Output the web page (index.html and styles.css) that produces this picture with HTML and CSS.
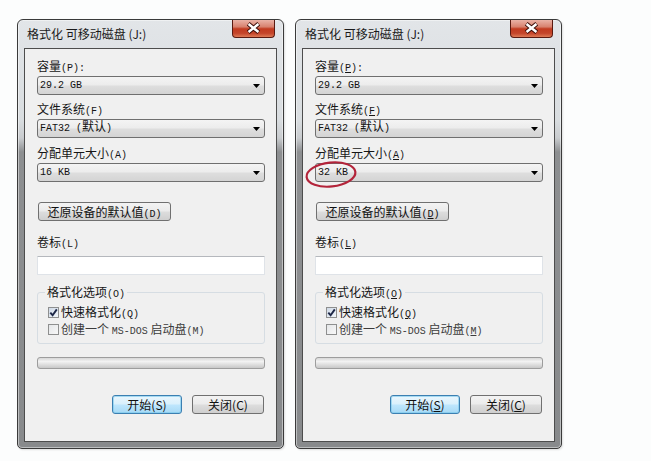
FILE: index.html
```html
<!DOCTYPE html>
<html lang="zh-CN">
<head>
<meta charset="utf-8">
<title>格式化 可移动磁盘 (J:)</title>
<link rel="stylesheet" href="styles.css">
</head>
<body>
<div class="page">
  <div class="win">
    <div class="titlebar">
      <span class="title">格式化 可移动磁盘 (J:)</span>
      <div class="close"><svg width="43" height="17" viewBox="0 0 43 17"><path d="M16 3.5 L27 12.5 M27 3.5 L16 12.5" stroke="#3a0d08" stroke-width="4.6" fill="none"/><path d="M16.3 3.8 L26.7 12.2 M26.7 3.8 L16.3 12.2" stroke="#ffffff" stroke-width="2.6" fill="none"/></svg></div>
    </div>
    <div class="client">
      <div class="lbl">容量<span class="m">(P):</span></div>
      <div class="combo"><span class="val">29.2 GB</span><svg class="arrow" width="7" height="4" viewBox="0 0 7 4"><path d="M0 0H7L3.5 4Z" fill="#000"/></svg></div>
      <div class="lbl gap8">文件系统<span class="m">(F)</span></div>
      <div class="combo"><span class="val">FAT32 (<span class="cj">默认</span>)</span><svg class="arrow" width="7" height="4" viewBox="0 0 7 4"><path d="M0 0H7L3.5 4Z" fill="#000"/></svg></div>
      <div class="lbl gap9">分配单元大小<span class="m">(A)</span></div>
      <div class="combo"><span class="val">16 KB</span><svg class="arrow" width="7" height="4" viewBox="0 0 7 4"><path d="M0 0H7L3.5 4Z" fill="#000"/></svg></div>
      <div class="btn restore">还原设备的默认值<span class="m">(D)</span></div>
      <div class="lbl gap15">卷标<span class="m">(L)</span></div>
      <div class="input"></div>
      <fieldset class="group">
        <legend>格式化选项<span class="m">(O)</span></legend>
        <div class="row first"><span class="chk on"><svg width="9" height="9" viewBox="0 0 9 9"><path d="M1.3 4.6 L3.6 7.2 L7.8 1.4" stroke="#1d2747" stroke-width="1.9" fill="none"/></svg></span><span class="rt">快速格式化<span class="m">(Q)</span></span></div>
        <div class="row dim"><span class="chk"></span><span class="rt">创建一个 <span class="m">MS-DOS</span> 启动盘<span class="m">(M)</span></span></div>
      </fieldset>
      <div class="progress"></div>
      <div class="actions">
        <div class="btn primary w70">开始(S)</div>
        <div class="btn w72">关闭(C)</div>
      </div>
    </div>
  </div>

  <div class="win">
    <div class="titlebar">
      <span class="title">格式化 可移动磁盘 (J:)</span>
      <div class="close"><svg width="43" height="17" viewBox="0 0 43 17"><path d="M16 3.5 L27 12.5 M27 3.5 L16 12.5" stroke="#3a0d08" stroke-width="4.6" fill="none"/><path d="M16.3 3.8 L26.7 12.2 M26.7 3.8 L16.3 12.2" stroke="#ffffff" stroke-width="2.6" fill="none"/></svg></div>
    </div>
    <div class="client">
      <div class="lbl">容量<span class="m">(<u>P</u>):</span></div>
      <div class="combo"><span class="val">29.2 GB</span><svg class="arrow" width="7" height="4" viewBox="0 0 7 4"><path d="M0 0H7L3.5 4Z" fill="#000"/></svg></div>
      <div class="lbl gap8">文件系统<span class="m">(<u>F</u>)</span></div>
      <div class="combo"><span class="val">FAT32 (<span class="cj">默认</span>)</span><svg class="arrow" width="7" height="4" viewBox="0 0 7 4"><path d="M0 0H7L3.5 4Z" fill="#000"/></svg></div>
      <div class="lbl gap9">分配单元大小<span class="m">(<u>A</u>)</span></div>
      <div class="combo marked"><span class="val">32 KB</span><svg class="arrow" width="7" height="4" viewBox="0 0 7 4"><path d="M0 0H7L3.5 4Z" fill="#000"/></svg>
        <svg class="mark" width="56" height="32" viewBox="0 0 56 32"><ellipse cx="28" cy="15.5" rx="24.5" ry="12" transform="rotate(-6 28 15.5)" fill="none" stroke="#b3243a" stroke-width="2.2"/></svg>
      </div>
      <div class="btn restore">还原设备的默认值<span class="m">(<u>D</u>)</span></div>
      <div class="lbl gap15">卷标<span class="m">(<u>L</u>)</span></div>
      <div class="input"></div>
      <fieldset class="group">
        <legend>格式化选项<span class="m">(<u>O</u>)</span></legend>
        <div class="row first"><span class="chk on"><svg width="9" height="9" viewBox="0 0 9 9"><path d="M1.3 4.6 L3.6 7.2 L7.8 1.4" stroke="#1d2747" stroke-width="1.9" fill="none"/></svg></span><span class="rt">快速格式化<span class="m">(<u>Q</u>)</span></span></div>
        <div class="row dim"><span class="chk"></span><span class="rt">创建一个 <span class="m">MS-DOS</span> 启动盘<span class="m">(<u>M</u>)</span></span></div>
      </fieldset>
      <div class="progress"></div>
      <div class="actions">
        <div class="btn primary w70">开始(<u>S</u>)</div>
        <div class="btn w72">关闭(<u>C</u>)</div>
      </div>
    </div>
  </div>
</div>
</body>
</html>
```

FILE: styles.css
```css
* { box-sizing: border-box; }
html, body { margin: 0; padding: 0; }
body {
  width: 651px;
  height: 461px;
  overflow: hidden;
  background: #fcfdfd;
  font-family: "Noto Sans CJK SC", "Noto Sans", sans-serif;
  color: #151515;
}
.page {
  display: flex;
  gap: 11px;
  padding: 19px 0 0 17px;
}
.win {
  width: 267px;
  height: 430px;
  border: 1px solid #3a3a3a;
  border-radius: 6px 6px 5px 5px;
  padding: 0 6px 6px;
  display: flex;
  flex-direction: column;
  background: linear-gradient(180deg, #e2e5e8 0px, #d9dde0 100px, #c9cccf 118px, #8d8f91 132px, #888a8c 100%);
  box-shadow: inset 0 0 0 1px rgba(255,255,255,0.45), 1px 1px 2px rgba(0,0,0,0.12);
}
.titlebar {
  height: 28px;
  display: flex;
  justify-content: space-between;
  align-items: flex-start;
}
.title {
  font-size: 12px;
  line-height: 14px;
  margin: 7px 0 0 3px;
  color: #1a1a1a;
  white-space: nowrap;
}
.close {
  width: 43px;
  height: 18px;
  margin-right: 2px;
  border: 1px solid #5a1a10;
  border-top: none;
  border-radius: 0 0 4px 4px;
  background: linear-gradient(180deg, #eab2a6 0%, #d8826f 40%, #c23b20 52%, #c4452a 78%, #de7a55 100%);
  display: flex;
  align-items: center;
  justify-content: center;
}
.close svg { display: block; }
.client {
  flex: 1;
  border: 1px solid #4d4d4d;
  background: #f0f0f0;
  padding: 11px 11px 0 12px;
  display: flex;
  flex-direction: column;
}
.lbl {
  font-size: 12px;
  line-height: 12px;
  height: 14px;
  white-space: nowrap;
  color: #161616;
}
.m {
  font-family: "Liberation Mono", "DejaVu Sans Mono", monospace;
  font-size: 10px;
  line-height: 8px;
}
u { text-decoration-thickness: 1px; text-underline-offset: 1px; }
.gap8 { margin-top: 8px; }
.gap9 { margin-top: 9px; }
.gap15 { margin-top: 15px; }
.combo {
  position: relative;
  margin-top: 2px;
  height: 19px;
  border: 1px solid #6f6f6f;
  border-radius: 3px;
  background: linear-gradient(180deg, #f4f4f4 0%, #ececec 48%, #dedede 52%, #d4d4d4 100%);
  display: flex;
  align-items: center;
  justify-content: space-between;
  padding: 0 4px 0 2px;
}
.val {
  font-family: "Liberation Mono", "DejaVu Sans Mono", monospace;
  font-size: 10px;
  line-height: 14px;
  color: #111;
  white-space: pre;
}
.cj {
  font-family: "Noto Sans CJK SC", sans-serif;
  font-size: 12px;
  line-height: 8px;
}
.arrow { display: block; }
.mark {
  position: absolute;
  left: -13px;
  top: -5px;
}
.btn {
  height: 19px;
  border: 1px solid #707070;
  border-radius: 3px;
  background: linear-gradient(180deg, #f3f3f3 0%, #ebebeb 48%, #dddddd 52%, #cfcfcf 100%);
  font-size: 12px;
  line-height: 17px;
  text-align: center;
  white-space: nowrap;
  color: #111;
}
.restore {
  margin-top: 20px;
  width: 133px;
  margin-left: 1px;
}
.input {
  margin-top: 6px;
  height: 19px;
  background: #ffffff;
  border: 1px solid #dfe3e8;
  border-top-color: #b5b8bd;
  border-radius: 1px;
}
.group {
  margin: 10px 0 0 0;
  padding: 0 0 7px 0;
  border: 1px solid #d6dde3;
  border-radius: 3px;
  min-width: 0;
}
.group legend {
  font-size: 12px;
  line-height: 13px;
  height: 14px;
  padding: 0 2px;
  margin-left: 7px;
  color: #161616;
}
.row {
  display: flex;
  align-items: center;
  height: 14px;
  margin-top: 3px;
  padding-left: 10px;
  font-size: 12px;
  line-height: 14px;
  color: #161616;
}
.rt { white-space: pre; line-height: 13px; height: 14px; }
.row.first { margin-top: 6px; }
.row.dim { color: #3c3c3c; }
.chk {
  width: 11px;
  height: 11px;
  border: 1px solid #8e8f8f;
  background: linear-gradient(135deg, #e4e6e8 0%, #f8f8f8 100%);
  margin-right: 2px;
  display: flex;
  align-items: center;
  justify-content: center;
  flex: none;
}
.chk.on { background: linear-gradient(135deg, #cfd9e6 0%, #f2f6fa 100%); }
.chk svg { display: block; }
.progress {
  margin-top: 13px;
  height: 12px;
  border: 1px solid #9d9d9d;
  border-radius: 3px;
  background: linear-gradient(180deg, #d8d8d8 0%, #f2f2f2 35%, #e2e2e2 60%, #c8c8c8 100%);
}
.actions {
  margin-top: 26px;
  display: flex;
  justify-content: flex-end;
  gap: 10px;
  padding-right: 1px;
}
.w70 { width: 70px; }
.w72 { width: 72px; }
.primary {
  border-color: #3c7fb1;
  background: linear-gradient(180deg, #eaf6fd 0%, #d9f0fc 48%, #bee6fd 52%, #a7d9f5 100%);
  box-shadow: inset 0 0 0 1px rgba(120, 200, 235, 0.6);
}
```
